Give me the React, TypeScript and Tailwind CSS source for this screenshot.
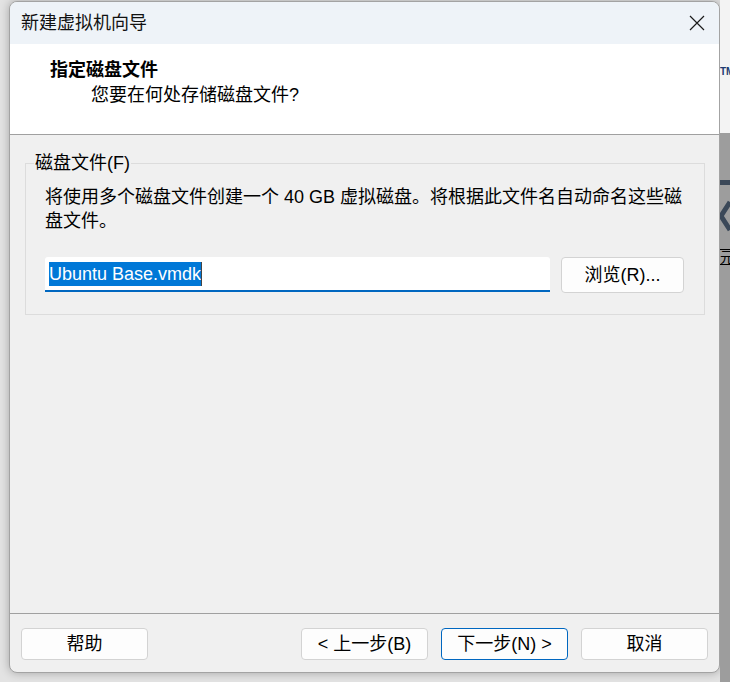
const font = "font-['Liberation_Sans','Noto_Sans_CJK_SC',sans-serif]";

function CloseIcon() {
  return (
    <svg width="16" height="16" viewBox="0 0 16 16" fill="none">
      <path d="M1 1L15 15M15 1L1 15" stroke="#1b1b1b" strokeWidth="1.2" />
    </svg>
  );
}

function WizardButton({ label, primary }: { label: string; primary?: boolean }) {
  return (
    <button
      className={
        primary
          ? 'flex h-[32px] w-[127px] items-center justify-center rounded-[4px] border border-[#0067c0] bg-[#fdfdfd] text-[18px] leading-none text-black'
          : 'flex h-[32px] w-[127px] items-center justify-center rounded-[4px] border border-[#d3d3d3] bg-[#fdfdfd] text-[18px] leading-none text-black'
      }
    >
      {label}
    </button>
  );
}

// sliver of the window that sits behind the dialog
function BackgroundApp() {
  return (
    <div className="flex h-full w-[10px] shrink-0 flex-col overflow-hidden">
      <div className="flex h-[133px] flex-col bg-[#f3f3f3] pt-[66px]">
        <span className="text-[10px] font-bold leading-[12px] text-[#1f3b70]">TM</span>
      </div>
      <div className="flex flex-1 flex-col bg-[#9d9d9d] pt-[47px]">
        <div className="h-[5px] w-full bg-[#3b4858]" />
        <svg className="mt-[14px]" width="10" height="34" viewBox="0 0 10 34">
          <path d="M10 3L1 17L10 31" stroke="#3b4858" strokeWidth="5" fill="none" />
        </svg>
        <div className="mt-[16px] border-y border-black text-[14px] leading-[14px] text-black">元</div>
      </div>
    </div>
  );
}

export default function App() {
  return (
    <div className={`flex h-[682px] w-[730px] overflow-hidden bg-[#e3e3e3] ${font}`}>
      <div className="ml-[9px] mt-[1px] flex h-[672px] w-[711px] shrink-0 flex-col overflow-hidden rounded-[8px] border border-[#a3a3a3] bg-[#f0f0f0] shadow-[0_0_10px_rgba(0,0,0,0.28)]">
        {/* title bar */}
        <div className="flex h-[42px] shrink-0 items-center justify-between bg-[#eef3f8] pl-[11px] pr-[14px]">
          <span className="text-[18px] leading-[24px] text-[#111]">新建虚拟机向导</span>
          <CloseIcon />
        </div>

        {/* page header */}
        <div className="h-[91px] shrink-0 border-b border-[#a0a0a0] bg-white pt-[14px]">
          <div className="pl-[40px] text-[18px] font-bold leading-[24px] text-black">指定磁盘文件</div>
          <div className="mt-[1px] pl-[81px] text-[18px] leading-[24px] text-black">您要在何处存储磁盘文件?</div>
        </div>

        {/* page body */}
        <div className="h-[479px] shrink-0 border-b border-[#a0a0a0] pt-[16px]">
          <fieldset className="ml-[15px] mr-[14px] border border-[#dcdcdc]">
            <legend className="ml-[8px] px-[1px] text-[18px] leading-[24px] text-black">磁盘文件(F)</legend>
            <div className="pb-[21px] pl-[19px] pr-[20px]">
              <p className="mt-[10px] mr-[-4px] text-[18px] leading-[24px] text-black">
                将使用多个磁盘文件创建一个 40 GB 虚拟磁盘。将根据此文件名自动命名这些磁盘文件。
              </p>
              <div className="mt-[24px] flex items-start gap-[11px]">
                <div className="flex h-[35px] flex-1 items-center rounded-t-[3px] border-b-2 border-[#0067c0] bg-white pl-[4px]">
                  <span className="bg-[#0078d7] text-[18px] leading-[24px] text-white">Ubuntu Base.vmdk</span>
                  <span className="h-[24px] w-[1px] bg-[#444]" />
                </div>
                <button className="flex h-[36px] w-[123px] items-center justify-center rounded-[4px] border border-[#d3d3d3] bg-[#fdfdfd] text-[18px] leading-none text-black">
                  浏览(R)...
                </button>
              </div>
            </div>
          </fieldset>
        </div>

        {/* navigation */}
        <div className="flex flex-1 items-start gap-[13px] pl-[11px] pr-[11px] pt-[14px]">
          <WizardButton label="帮助" />
          <div className="ml-auto flex gap-[13px]">
            <WizardButton label="< 上一步(B)" />
            <WizardButton label="下一步(N) >" primary />
            <WizardButton label="取消" />
          </div>
        </div>
      </div>
      <BackgroundApp />
    </div>
  );
}
